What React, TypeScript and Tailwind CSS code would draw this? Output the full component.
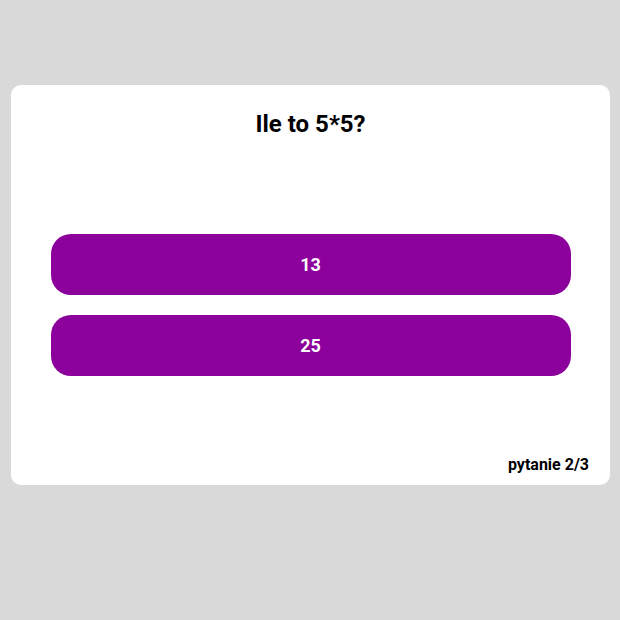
const answers = ["13", "25"];

const App = () => {
  return (
    <div
      className="min-h-[620px] bg-[#d9d9d9] pt-[85px] pl-[11px]"
      style={{ fontFamily: "Roboto, 'Liberation Sans', sans-serif" }}
    >
      <div className="w-[599px] h-[400px] bg-white rounded-[10px] flex flex-col pt-[23px]">
        <h1 className="text-center text-2xl leading-8 font-bold text-black">Ile to 5*5?</h1>
        <div className="mt-[94px] flex flex-col items-center gap-5">
          {answers.map((a) => (
            <button
              key={a}
              className="w-[520px] h-[61px] rounded-[20px] bg-[#8c009c] text-white text-lg font-bold"
            >
              {a}
            </button>
          ))}
        </div>
        <div className="mt-auto pr-[21px] pb-2 text-right text-base leading-6 font-bold text-black">
          pytanie 2/3
        </div>
      </div>
    </div>
  );
};

export default App;
